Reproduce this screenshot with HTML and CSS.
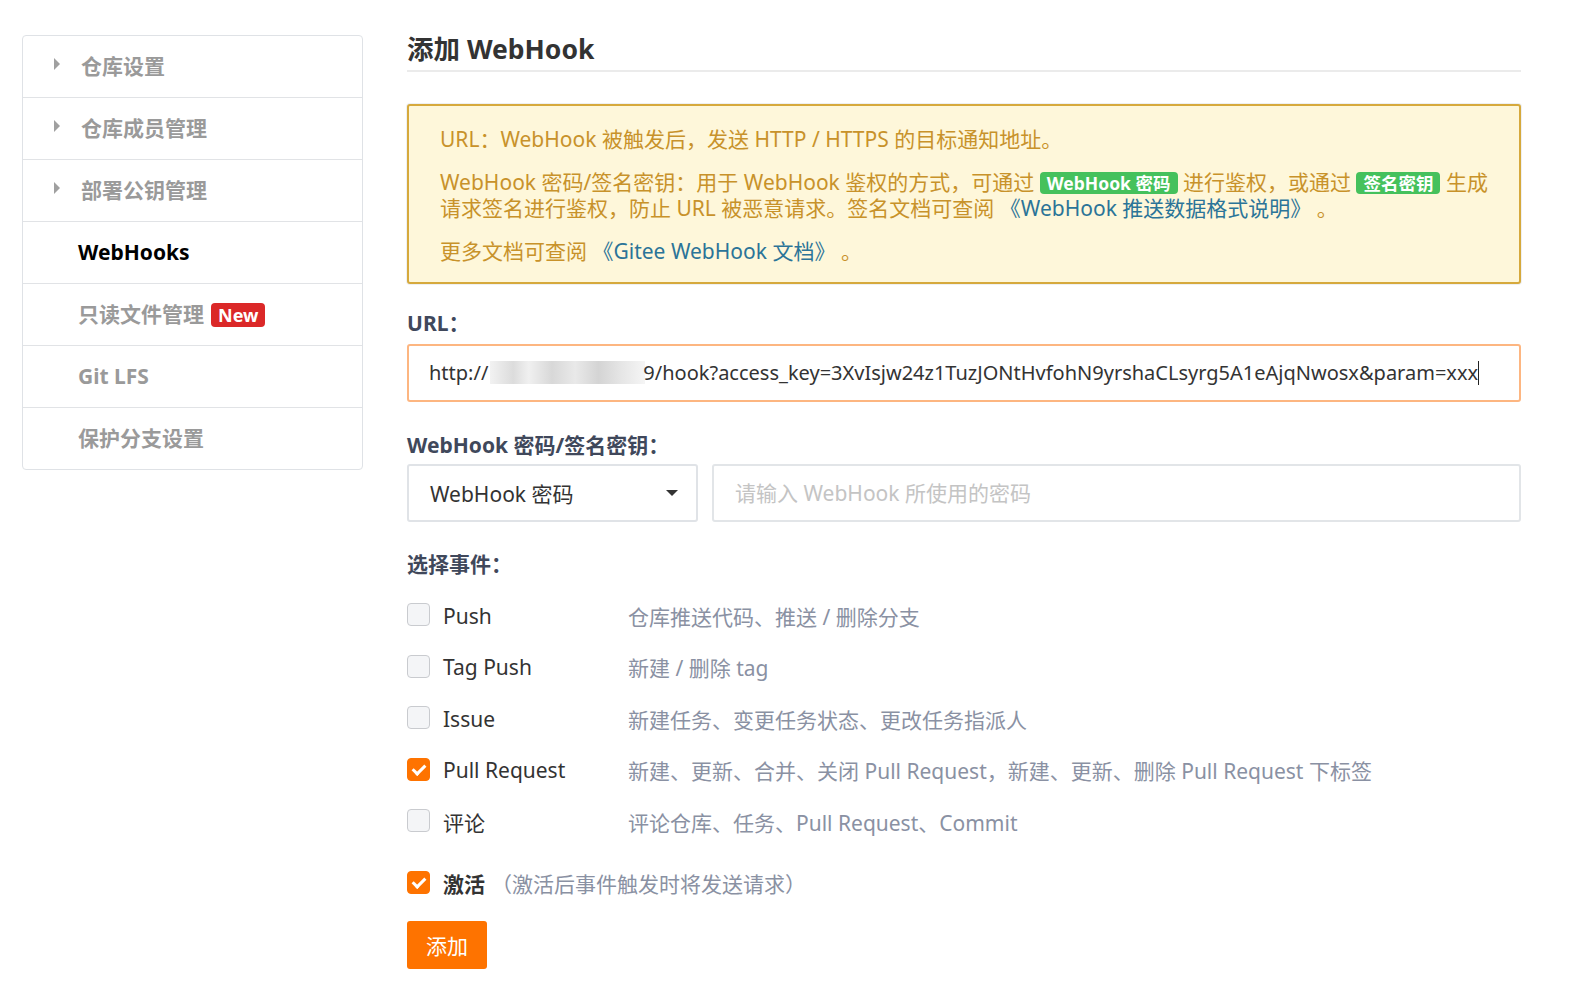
FILE: index.html
```html
<!DOCTYPE html>
<html lang="zh-CN">
<head>
    <meta charset="UTF-8">
    <meta name="viewport" content="width=device-width, initial-scale=1.0">
    <title>添加 WebHook</title>
    <link rel="stylesheet" href="styles.css">
</head>
<body>
    <div class="page">
        <nav class="side-menu">
            <a class="menu-item has-caret" href="#"><span class="caret"></span>仓库设置</a>
            <a class="menu-item has-caret" href="#"><span class="caret"></span>仓库成员管理</a>
            <a class="menu-item has-caret" href="#"><span class="caret"></span>部署公钥管理</a>
            <a class="menu-item active" href="#">WebHooks</a>
            <a class="menu-item" href="#">只读文件管理 <span class="badge-new">New</span></a>
            <a class="menu-item" href="#">Git LFS</a>
            <a class="menu-item" href="#">保护分支设置</a>
        </nav>

        <main class="content">
            <h2 class="page-title">添加 WebHook</h2>

            <div class="notice">
                <p>URL：WebHook 被触发后，发送 HTTP / HTTPS 的目标通知地址。</p>
                <p>WebHook 密码/签名密钥：用于 WebHook 鉴权的方式，可通过 <span class="tag-green">WebHook 密码</span> 进行鉴权，或通过 <span class="tag-green">签名密钥</span> 生成请求签名进行鉴权，防止 URL 被恶意请求。签名文档可查阅 <a href="#">《WebHook 推送数据格式说明》</a> 。</p>
                <p>更多文档可查阅 <a href="#">《Gitee WebHook 文档》</a> 。</p>
            </div>

            <form id="hookForm">
                <label class="field-label url-label">URL：</label>
                <div class="url-input">
                    <span>http://</span><span class="blurred"></span><span>9/hook?access_key=3XvIsjw24z1TuzJONtHvfohN9yrshaCLsyrg5A1eAjqNwosx&amp;param=xxx</span><span class="cursor"></span>
                </div>

                <label class="field-label secret-label">WebHook 密码/签名密钥：</label>
                <div class="secret-row">
                    <div class="select-box">
                        <span>WebHook 密码</span>
                        <span class="select-arrow"></span>
                    </div>
                    <input class="text-input" type="text" placeholder="请输入 WebHook 所使用的密码">
                </div>

                <label class="field-label events-label">选择事件：</label>
                <div class="events">
                    <div class="event-row">
                        <span class="check"></span>
                        <span class="event-name">Push</span>
                        <span class="event-desc">仓库推送代码、推送 / 删除分支</span>
                    </div>
                    <div class="event-row">
                        <span class="check"></span>
                        <span class="event-name">Tag Push</span>
                        <span class="event-desc">新建 / 删除 tag</span>
                    </div>
                    <div class="event-row">
                        <span class="check"></span>
                        <span class="event-name">Issue</span>
                        <span class="event-desc">新建任务、变更任务状态、更改任务指派人</span>
                    </div>
                    <div class="event-row">
                        <span class="check checked"></span>
                        <span class="event-name">Pull Request</span>
                        <span class="event-desc">新建、更新、合并、关闭 Pull Request，新建、更新、删除 Pull Request 下标签</span>
                    </div>
                    <div class="event-row">
                        <span class="check"></span>
                        <span class="event-name">评论</span>
                        <span class="event-desc">评论仓库、任务、Pull Request、Commit</span>
                    </div>
                </div>

                <div class="active-row">
                    <span class="check checked"></span>
                    <strong>激活</strong>
                    <span class="active-hint">（激活后事件触发时将发送请求）</span>
                </div>

                <button type="submit" class="btn-add">添加</button>
            </form>
        </main>
    </div>
</body>
</html>
```

FILE: styles.css
```css
body {
    font-family: "Noto Sans", "Noto Sans CJK SC", sans-serif;
    font-size: 21px;
    color: #333;
    background-color: white;
    margin: 0;
    padding: 0;
}

.page {
    display: flex;
    align-items: flex-start;
    padding: 30px 0 0 22px;
    gap: 44px;
}

/* side menu */
.side-menu {
    width: 339px;
    margin-top: 5px;
    border: 1px solid #dfe2e6;
    border-radius: 4px;
    display: flex;
    flex-direction: column;
}

.menu-item {
    display: flex;
    align-items: center;
    height: 61px;
    padding-left: 55px;
    border-top: 1px solid #e1e3e6;
    color: #9a9a9a;
    font-weight: 700;
    text-decoration: none;
    line-height: 1;
}

.menu-item:first-child {
    border-top: none;
}

.menu-item.has-caret {
    padding-left: 31px;
}

.caret {
    width: 0;
    height: 0;
    border-top: 6px solid transparent;
    border-bottom: 6px solid transparent;
    border-left: 6px solid #a0a0a0;
    margin-right: 21px;
    margin-top: -5px;
}

.menu-item.active {
    color: #000;
}

.badge-new {
    display: inline-block;
    background-color: #db2828;
    color: white;
    font-size: 18px;
    font-weight: 700;
    line-height: 24px;
    padding: 0 7px;
    border-radius: 4px;
    margin-left: 7px;
}

/* main content */
.content {
    width: 1114px;
}

.page-title {
    margin: 0;
    font-size: 26.5px;
    line-height: 38px;
    font-weight: 700;
    color: #333;
    padding-bottom: 2px;
    border-bottom: 2px solid #ebebeb;
}

.notice {
    margin-top: 32px;
    background-color: #fef7da;
    border: 2px solid #d6a93c;
    border-radius: 3px;
    color: #c8922a;
    padding: 20px 30px 17px 31px;
    line-height: 26.4px;
    box-shadow: 0 0 0 1px #eef0f2;
}

.notice p {
    margin: 0 0 16.6px 0;
}

.notice p:last-child {
    margin-bottom: 0;
}

.notice a {
    color: #2b7498;
    text-decoration: none;
}

.tag-green {
    display: inline-block;
    background-color: #45c15c;
    color: white;
    font-weight: 700;
    font-size: 17.5px;
    line-height: 22px;
    padding: 0 7px;
    border-radius: 4px;
}

.field-label {
    display: block;
    font-weight: 700;
    color: #40485b;
    line-height: 26px;
}

.url-label {
    margin-top: 26px;
    margin-bottom: 8px;
}

.url-input {
    display: flex;
    align-items: center;
    height: 54px;
    border: 2px solid #fdb681;
    border-radius: 3px;
    padding: 0 20px;
    font-size: 20px;
    color: #333;
    white-space: nowrap;
    overflow: hidden;
}

.blurred {
    display: inline-block;
    width: 155px;
    height: 23px;
    background: linear-gradient(90deg, #f2f2f2 0%, #dcdcdc 15%, #f0f0f0 25%, #d8d8d8 40%, #e9e9e9 55%, #d4d4d4 70%, #e6e6e6 85%, #f5f5f5 100%);
    margin: 0 -2px 0 2px;
}

.cursor {
    display: inline-block;
    width: 1px;
    height: 24px;
    background-color: #222;
}

.secret-label {
    margin-top: 30px;
    margin-bottom: 6px;
}

.secret-row {
    display: flex;
    gap: 14px;
}

.select-box {
    width: 291px;
    box-sizing: border-box;
    height: 58px;
    border: 2px solid #e0e3e7;
    border-radius: 3px;
    display: flex;
    align-items: center;
    justify-content: space-between;
    padding: 0 18px 0 21px;
    color: #333;
}

.select-arrow {
    width: 0;
    height: 0;
    border-left: 6px solid transparent;
    border-right: 6px solid transparent;
    border-top: 6px solid #333;
}

.text-input {
    flex: 1;
    height: 58px;
    box-sizing: border-box;
    border: 2px solid #e2e5e8;
    border-radius: 3px;
    padding: 0 21px;
    font-family: inherit;
    font-size: 21px;
    color: #333;
    outline: none;
}

.text-input::placeholder {
    color: #c4c4c4;
}

.events-label {
    margin-top: 29.5px;
    margin-bottom: 12.5px;
}

.event-row,
.active-row {
    display: flex;
    align-items: center;
    height: 51.5px;
}

.check {
    flex: none;
    width: 21px;
    height: 21px;
    border: 1px solid #c9cbcf;
    background-color: #f4f5f7;
    border-radius: 4px;
    margin-right: 13px;
    position: relative;
    top: -1px;
}

.check.checked {
    background-color: #fe7300;
    border-color: #fe7300;
}

.check.checked::after {
    content: "";
    position: absolute;
    left: 7px;
    top: 3px;
    width: 5px;
    height: 10px;
    border-right: 3px solid white;
    border-bottom: 3px solid white;
    transform: rotate(45deg);
}

.event-name {
    width: 185px;
    color: #333;
}

.event-desc {
    color: #8a91a3;
}

.active-row {
    margin-top: 10px;
}

.active-row strong {
    color: #333;
}

.active-hint {
    color: #8a91a3;
    margin-left: 6px;
}

.btn-add {
    margin-top: 12.5px;
    width: 80px;
    height: 47.5px;
    background-color: #fe7300;
    color: white;
    border: none;
    border-radius: 3px;
    font-family: inherit;
    font-size: 21px;
    cursor: pointer;
}

.btn-add:hover {
    background-color: #f06c00;
}
```
